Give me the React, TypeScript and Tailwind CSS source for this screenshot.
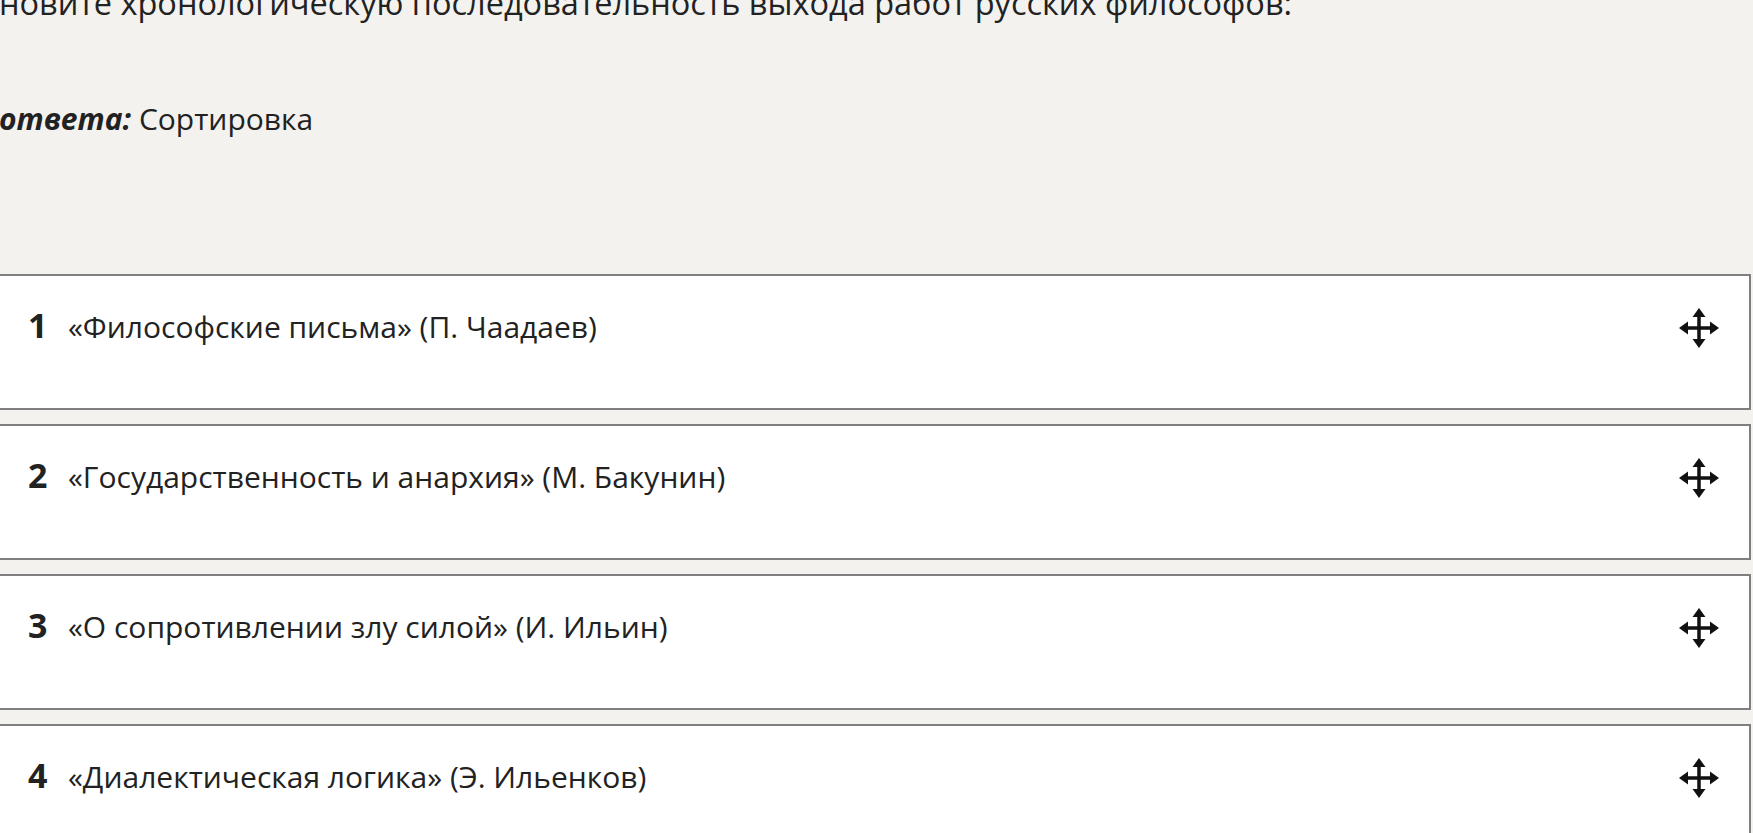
import React from "react"

const items = [
  "«Философские письма» (П. Чаадаев)",
  "«Государственность и анархия» (М. Бакунин)",
  "«О сопротивлении злу силой» (И. Ильин)",
  "«Диалектическая логика» (Э. Ильенков)",
]

function MoveIcon() {
  return (
    <svg width="40" height="40" viewBox="0 0 40 40" className="shrink-0 self-start mt-[5px]">
      <rect x="6" y="18.25" width="28" height="3.5" fill="#111" />
      <rect x="18.25" y="6" width="3.5" height="28" fill="#111" />
      <polygon points="0,20 9,13.5 9,26.5" fill="#111" />
      <polygon points="40,20 31,13.5 31,26.5" fill="#111" />
      <polygon points="20,0 13.5,9 26.5,9" fill="#111" />
      <polygon points="20,40 13.5,31 26.5,31" fill="#111" />
    </svg>
  )
}

export default function App() {
  return (
    <div
      className="w-full h-[833px] overflow-hidden bg-[#f3f2ef] text-[#222] text-[30px] leading-[45px]"
      style={{ fontFamily: '"Open Sans", "Noto Sans", sans-serif' }}
    >
      {/* Question */}
      <p className="ml-[-70px] mt-[-21px] text-[32.5px] leading-[48px] whitespace-nowrap">
        Установите хронологическую последовательность выхода работ русских философов:
      </p>
      <p className="ml-[-61px] mt-[69px] whitespace-nowrap">
        <b className="italic font-bold">Тип ответа:</b> Сортировка
      </p>

      {/* Sortable list */}
      <div className="mt-[133px] ml-[-12px] mr-[2px] flex flex-col gap-[14px]">
        {items.map((text, i) => (
          <div
            key={i}
            className="h-[136px] bg-white border-2 border-[#7f7f7f] pl-[38px] pr-[30px] pt-[27px] flex items-baseline"
          >
            <span className="w-[40px] shrink-0 font-bold text-[34px]">{i + 1}</span>
            <span className="flex-1 whitespace-nowrap">{text}</span>
            <MoveIcon />
          </div>
        ))}
      </div>
    </div>
  )
}
